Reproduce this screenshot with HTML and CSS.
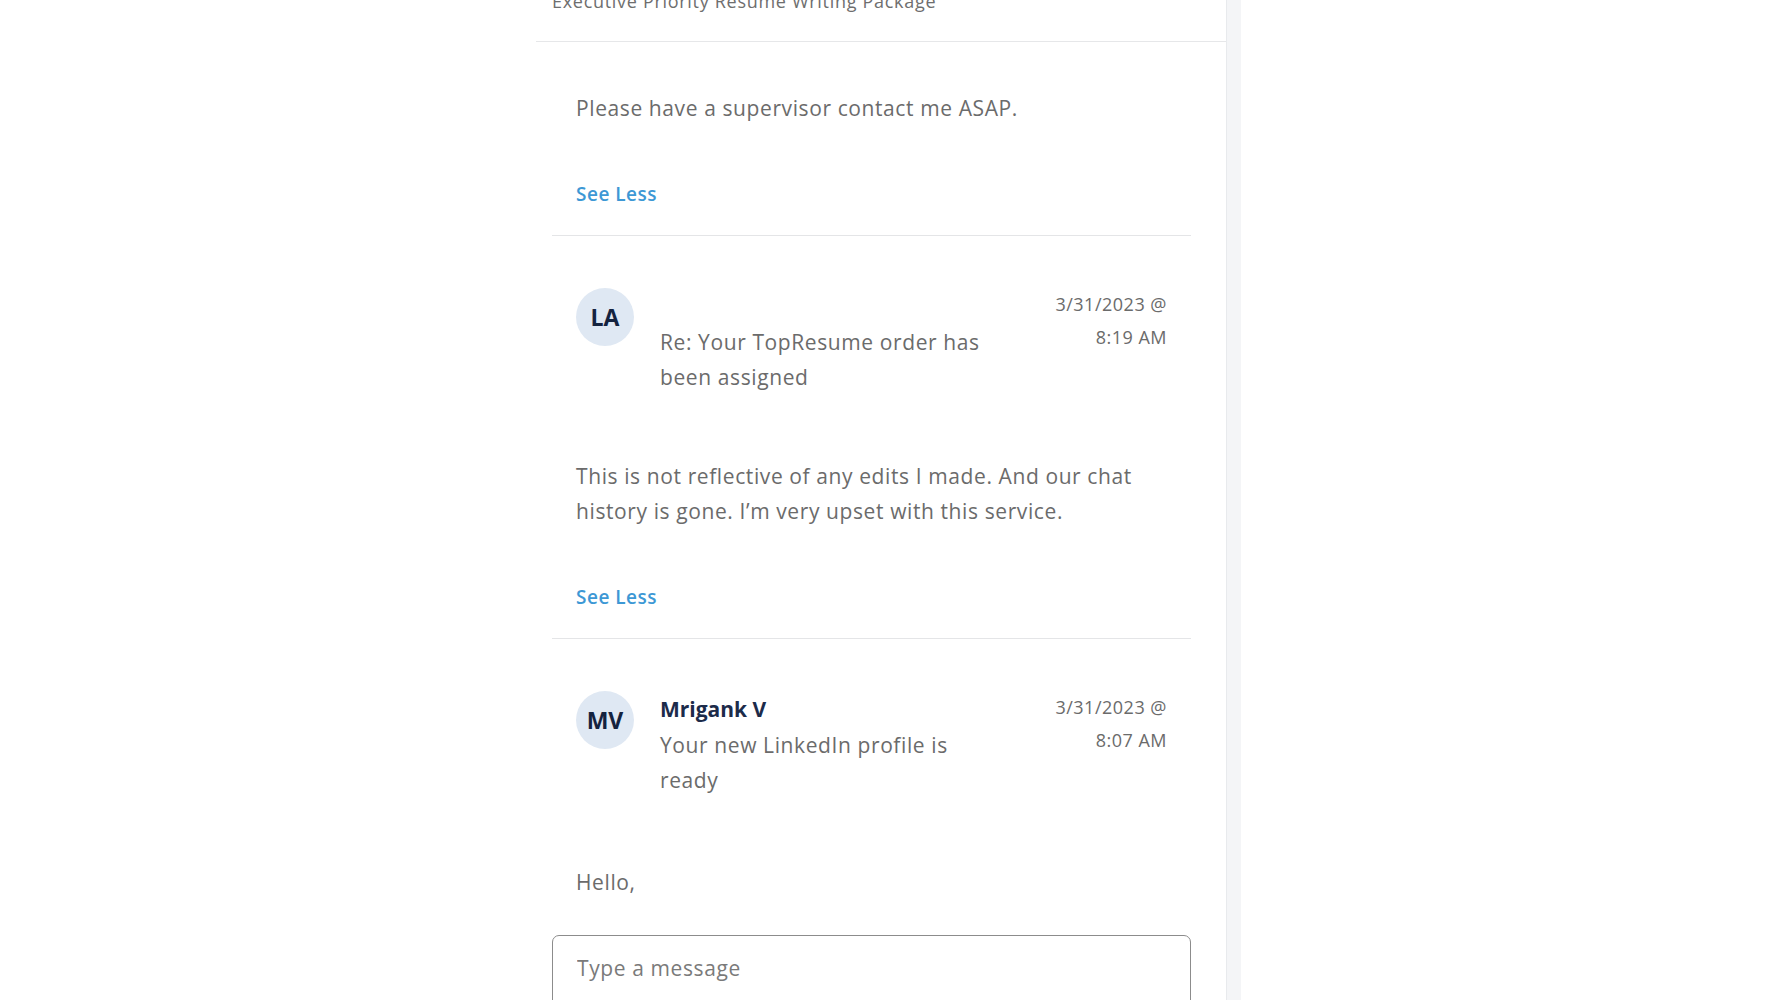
FILE: index.html
```html
<!DOCTYPE html>
<html lang="en">

<head>
    <meta charset="UTF-8">
    <meta name="viewport" content="width=device-width, initial-scale=1.0">
    <title>Messages</title>
    <link rel="stylesheet" href="styles.css">
</head>

<body>

    <div class="page">
        <div class="side-gap"></div>

        <div class="panel">
            <div class="panel-header">
                <span class="order-name">Executive Priority Resume Writing Package</span>
            </div>

            <div class="thread">
                <div class="msg first">
                    <p class="msg-body">Please have a supervisor contact me ASAP.</p>
                    <a class="see-less" href="#">See Less</a>
                </div>

                <div class="msg">
                    <div class="msg-head">
                        <div class="avatar">LA</div>
                        <div class="msg-meta">
                            <div class="sender"></div>
                            <div class="subject">Re: Your TopResume order has been assigned</div>
                        </div>
                        <div class="msg-date">3/31/2023 @ 8:19 AM</div>
                    </div>
                    <p class="msg-body">This is not reflective of any edits I made. And our chat history is gone. I’m very upset with this service.</p>
                    <a class="see-less" href="#">See Less</a>
                </div>

                <div class="msg last">
                    <div class="msg-head">
                        <div class="avatar">MV</div>
                        <div class="msg-meta">
                            <div class="sender">Mrigank V</div>
                            <div class="subject">Your new LinkedIn profile is ready</div>
                        </div>
                        <div class="msg-date">3/31/2023 @ 8:07 AM</div>
                    </div>
                    <p class="msg-body">Hello,</p>
                </div>

                <div class="composer">
                    <input type="text" class="composer-input" placeholder="Type a message">
                </div>
            </div>
        </div>

        <div class="scroll-track"></div>
    </div>

</body>

</html>
```

FILE: styles.css
```css
/* Reset */
* {
    box-sizing: border-box;
    margin: 0;
    padding: 0;
}

body {
    height: 100vh;
    overflow: hidden;
    background-color: #fff;
    font-family: 'Open Sans', 'Lato', sans-serif;
    color: #666;
}

/* Page columns */
.page {
    display: flex;
    height: 100vh;
}

.side-gap {
    width: 536px;
    flex-shrink: 0;
}

.panel {
    width: 691px;
    flex-shrink: 0;
    border-right: 1px solid #e8eaed;
    display: flex;
    flex-direction: column;
}

.scroll-track {
    width: 14px;
    background-color: #f4f5f7;
}

/* Header (scrolled mostly out of view) */
.panel-header {
    height: 42px;
    flex-shrink: 0;
    display: flex;
    align-items: flex-end;
    padding: 0 0 28px 16px;
    border-bottom: 1px solid #e6e7e9;
}

.order-name {
    font-size: 18px;
    line-height: 24px;
    letter-spacing: 0.7px;
    color: #6e6e6e;
    white-space: nowrap;
}

/* Thread */
.thread {
    padding: 0 35px 0 16px;
}

.msg {
    padding: 52px 24px 26px;
    border-bottom: 1px solid #e4e5e7;
}

.msg.first {
    padding-top: 49px;
}

.msg.last {
    border-bottom: none;
    padding-bottom: 35px;
}

.msg-head {
    display: flex;
    align-items: flex-start;
}

.avatar {
    width: 58px;
    height: 58px;
    flex-shrink: 0;
    border-radius: 50%;
    background-color: #dfe8f3;
    color: #14233f;
    font-size: 23px;
    font-weight: 700;
    display: flex;
    justify-content: center;
    align-items: center;
}

.msg-meta {
    flex: 1;
    padding-left: 26px;
    padding-right: 20px;
}

.sender {
    height: 37px;
    line-height: 37px;
    font-size: 21px;
    font-weight: 700;
    color: #1c2b4a;
}

.subject {
    max-width: 328px;
    font-size: 21px;
    line-height: 35px;
    letter-spacing: 0.6px;
    color: #6b6b6b;
}

.msg-date {
    width: 130px;
    flex-shrink: 0;
    text-align: right;
    font-size: 18px;
    line-height: 33px;
    letter-spacing: 0.5px;
    color: #6b6b6b;
}

.msg-body {
    margin-top: 64px;
    font-size: 21px;
    line-height: 35px;
    letter-spacing: 0.6px;
    color: #6b6b6b;
}

.msg.first .msg-body {
    margin-top: 0;
}

.msg.last .msg-body {
    margin-top: 67px;
}

.see-less {
    display: inline-block;
    margin-top: 53px;
    font-size: 19px;
    line-height: 30px;
    letter-spacing: 0.5px;
    font-weight: 600;
    color: #3d98d5;
    text-decoration: none;
}

/* Composer */
.composer-input {
    width: 100%;
    height: 90px;
    padding: 0 24px 24px;
    border: 1.5px solid #8c8c8c;
    border-radius: 7px;
    font-family: inherit;
    font-size: 21px;
    letter-spacing: 0.6px;
    color: #6b6b6b;
    outline: none;
}

.composer-input::placeholder {
    color: #7a7a7a;
}
```
